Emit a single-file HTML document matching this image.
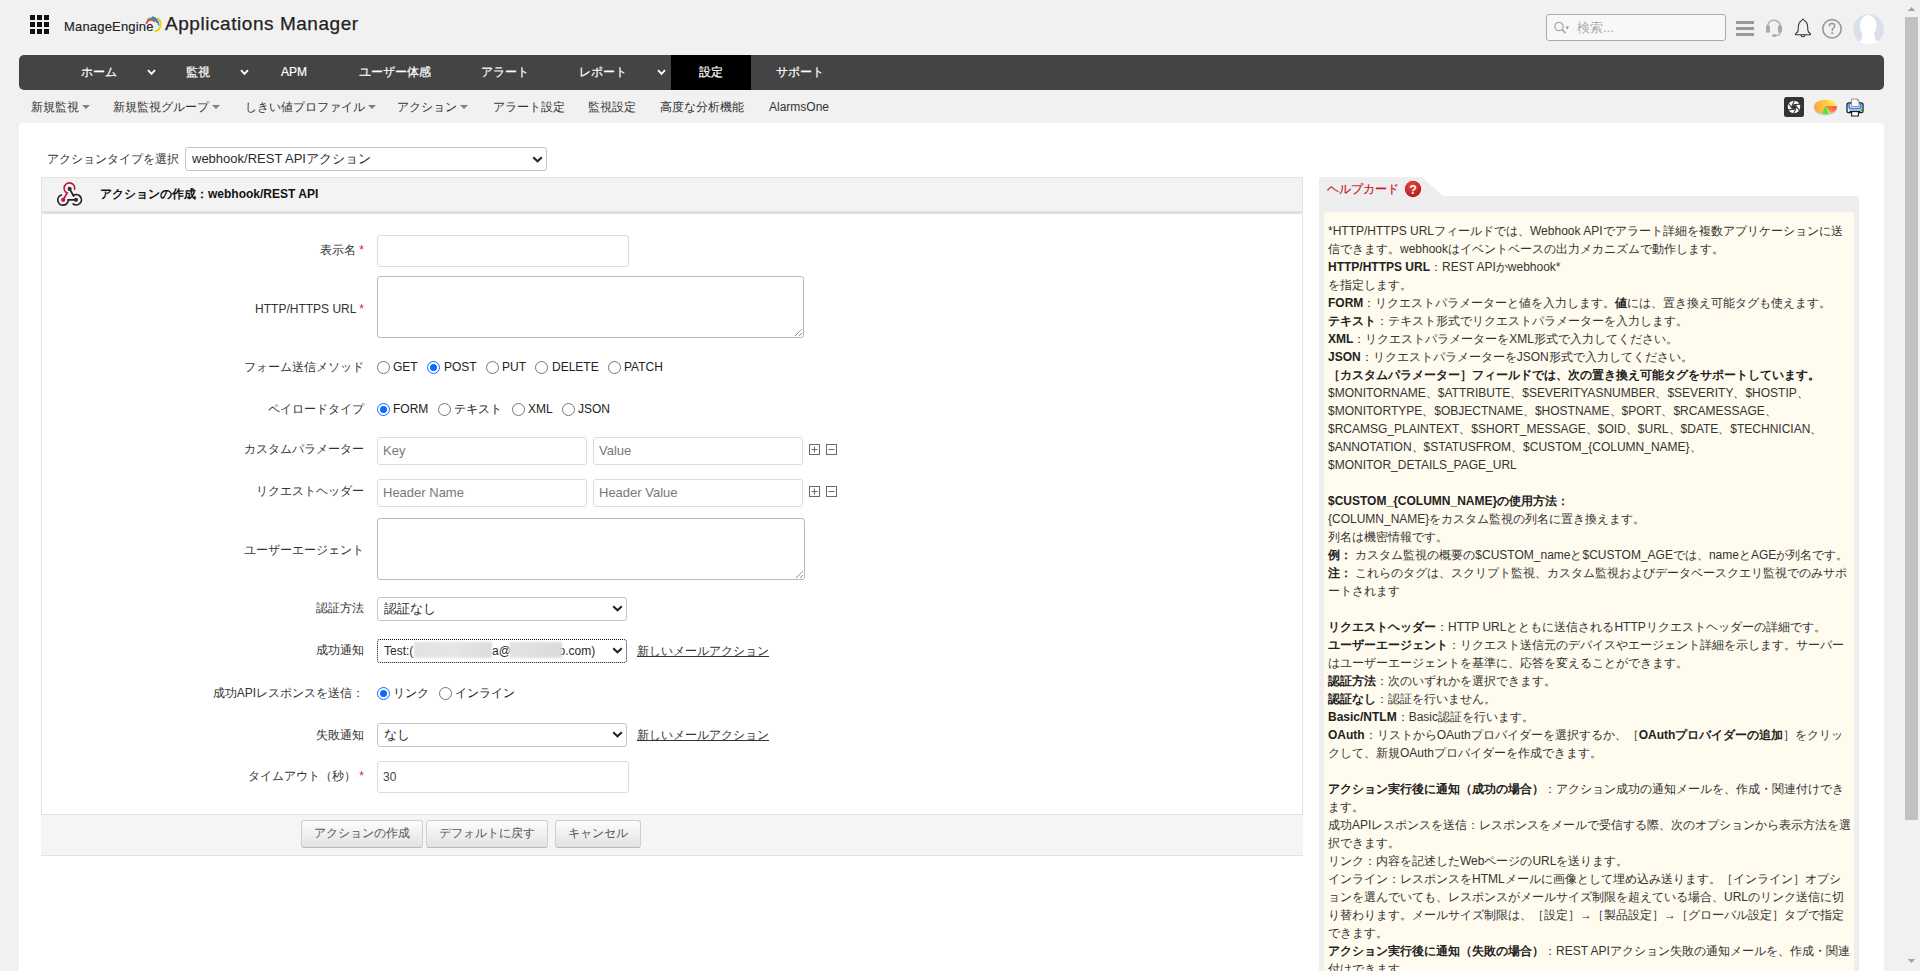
<!DOCTYPE html>
<html lang="ja">
<head>
<meta charset="utf-8">
<style>
*{box-sizing:border-box}
html,body{margin:0;padding:0;width:1920px;height:971px;overflow:hidden}
body{background:#f1f1f1;font-family:"Liberation Sans",sans-serif;font-size:12px;color:#333;position:relative}
.a{position:absolute;white-space:nowrap}
/* header */
.grid{left:30px;top:15px;width:19px;height:19px}
.grid i{position:absolute;width:5px;height:5px;background:#111}
.me{left:64px;top:19px;font-size:13px;line-height:15px;color:#222;letter-spacing:0.18px;-webkit-text-stroke:0.15px #222}
.am{left:165px;top:13px;font-size:19px;line-height:22px;color:#222;letter-spacing:0.55px;-webkit-text-stroke:0.25px #222}
.search{left:1546px;top:14px;width:180px;height:27px;border:1px solid #aaa;border-radius:3px;background:#f8f8f8}
.search span{position:absolute;left:30px;top:5px;color:#aaa;font-size:13px;line-height:15px}
/* nav */
.nav{left:19px;top:55px;width:1865px;height:35px;background:#444;border-radius:5px}
.nav .it{position:absolute;top:0;height:35px;line-height:34px;color:#fff;font-size:12px;-webkit-text-stroke:0.2px #fff}
.nav .chev{position:absolute}
.nav .act{position:absolute;left:652px;top:0;width:80px;height:35px;background:#000}
/* subnav */
.sub{top:100px;font-size:12px;color:#333;line-height:14px}
.tri{display:inline-block;width:0;height:0;border-left:4px solid transparent;border-right:4px solid transparent;border-top:4.5px solid #808080;vertical-align:middle;margin-left:3px;position:relative;top:-1px}
/* panel */
.panel{left:19px;top:123px;width:1865px;height:900px;background:#fff;border-radius:4px}
/* form */
.fp{left:41px;top:177px;width:1262px;height:679px;border:1px solid #e3e3e3;border-top:none}
.fh{left:41px;top:177px;width:1262px;height:37px;background:#f3f3f3;border:1px solid #e3e3e3;border-bottom:3px solid #e0e0e0}
.lbl{font-size:12px;color:#333;text-align:right;line-height:14px}
.star{color:#e0203c}
.inp{border:1px solid #dcdcdc;border-radius:3px;background:#fff}
.ta{border:1px solid #bbb;border-radius:3px;background:#fff}
.sel{border:1px solid #c4c4c4;border-radius:3px;background:#fff;font-size:13px;color:#2a2a2a}
.radio{width:13px;height:13px;border:1px solid #767676;border-radius:50%;background:#fff}
.radio.on{border-color:#0a6cff;border-width:1px}
.radio.on:after{content:"";position:absolute;left:2px;top:2px;width:7px;height:7px;border-radius:50%;background:#0a6cff}
.rt{font-size:12px;color:#222;line-height:14px}
.ph{font-size:13px;color:#777;line-height:15px}
.btn{height:28px;border:1px solid #cfcfcf;border-bottom-color:#b8b8b8;border-radius:3px;background:linear-gradient(#fdfdfd,#e2e2e2);font-size:12px;color:#555;text-align:center;line-height:25px}
.link{font-size:12px;color:#333;text-decoration:underline;line-height:14px}
/* help */
.hc{left:1319px;top:196px;width:540px;height:800px;background:#eee;border-radius:0 4px 0 0}
.htab{left:1319px;top:177px;width:125px;height:20px}
.hin{left:1324px;top:212px;width:530px;height:800px;background:#fffbee;border-radius:3px 3px 0 0}
.ht{left:1328px;top:222px;font-size:12px;line-height:18px;color:#333}
.ht b{color:#222}
</style>
</head>
<body>
<!-- header -->
<div class="a grid">
<i style="left:0;top:0"></i><i style="left:7px;top:0"></i><i style="left:14px;top:0"></i>
<i style="left:0;top:7px"></i><i style="left:7px;top:7px"></i><i style="left:14px;top:7px"></i>
<i style="left:0;top:14px"></i><i style="left:7px;top:14px"></i><i style="left:14px;top:14px"></i>
</div>
<div class="a me">ManageEngine</div>
<div class="a am">Applications Manager</div>

<svg class="a" style="left:140px;top:12px" width="26" height="24" viewBox="0 0 26 24">
 <path d="M7.4 7.8 A6.15 6.15 0 0 1 17.4 11" fill="none" stroke="#33a852" stroke-width="1.6"/>
 <path d="M12 5.1 A8.2 8.2 0 0 1 18.8 13.4" fill="none" stroke="#2f7bd8" stroke-width="1.6"/>
 <path d="M17.2 6 A7.10 7.10 0 0 1 14.6 19.2" fill="none" stroke="#f5d000" stroke-width="1.7"/>
 <path d="M6.2 11.8 A5.20 5.20 0 0 1 15.2 9.8" fill="none" stroke="#e8344a" stroke-width="1.6"/>
</svg>
<svg class="a" style="left:1552px;top:20px;z-index:2" width="20" height="16" viewBox="0 0 20 16">
 <circle cx="7" cy="6.5" r="4.2" fill="none" stroke="#aaa" stroke-width="1.3"/>
 <path d="M10 9.5 L13.5 13.2" stroke="#aaa" stroke-width="1.8"/>
 <path d="M13.5 6.4 L17 6.4 L15.25 9.8 Z" fill="#999"/>
</svg>
<svg class="a" style="left:1736px;top:21px" width="18" height="15"><rect x="0" y="0" width="18" height="3" fill="#9a9a9a"/><rect x="0" y="6" width="18" height="3" fill="#9a9a9a"/><rect x="0" y="12" width="18" height="3" fill="#9a9a9a"/></svg>
<svg class="a" style="left:1765px;top:18px" width="18" height="20" viewBox="0 0 18 20">
 <path d="M2.6 9.5 L2.6 8.5 A6.4 6.4 0 0 1 15.4 8.5 L15.4 9.5" fill="none" stroke="#aaa" stroke-width="1.4"/>
 <rect x="1" y="7.2" width="4" height="7.6" rx="1.6" fill="#aaa"/>
 <rect x="13" y="7.2" width="4" height="7.6" rx="1.6" fill="#aaa"/>
 <path d="M15.2 14.5 Q15 17.4 10.5 17.6" fill="none" stroke="#aaa" stroke-width="1.3"/>
 <rect x="7" y="16.2" width="4.4" height="2.8" rx="1.4" fill="#aaa"/>
</svg>
<svg class="a" style="left:1794px;top:18px" width="18" height="20" viewBox="0 0 18 20">
 <path d="M9 1 L10.8 3 C13 4.2 13.6 6.4 13.7 9 L13.9 12.6 C14.1 14 15.4 15 16.4 15.7 L16.4 16.7 L1.6 16.7 L1.6 15.7 C2.6 15 3.9 14 4.1 12.6 L4.3 9 C4.4 6.4 5 4.2 7.2 3 Z" fill="none" stroke="#333" stroke-width="1.05" stroke-linejoin="round"/>
 <path d="M7 17 A2 1.8 0 0 0 11 17" fill="none" stroke="#333" stroke-width="1.1"/>
</svg>
<svg class="a" style="left:1821px;top:18px" width="22" height="22" viewBox="0 0 22 22">
 <circle cx="11" cy="10.8" r="9.2" fill="none" stroke="#999" stroke-width="1.6"/>
 <path d="M8.3 8.2 C8.3 6.4 9.5 5.6 11 5.6 C12.6 5.6 13.7 6.6 13.7 8 C13.7 9.8 11.6 10 11.3 11.6 L11.3 13" fill="none" stroke="#999" stroke-width="1.5"/>
 <rect x="10.4" y="14.3" width="1.8" height="1.8" fill="#999"/>
</svg>
<svg class="a" style="left:1853px;top:14px" width="31" height="31" viewBox="0 0 31 31">
 <defs><clipPath id="avc"><circle cx="15.5" cy="15.5" r="15.2"/></clipPath></defs>
 <circle cx="15.5" cy="15.5" r="15.2" fill="#dae0ea"/>
 <g clip-path="url(#avc)" fill="#fff">
  <ellipse cx="15.2" cy="11.6" rx="8.4" ry="10.6"/>
  <path d="M9.6 19 L21 19 L21.8 24.5 C22.6 26.4 24.6 27.4 27.5 28 L27.5 32 L3.5 32 L3.5 28 C6.4 27.4 8.4 26.4 9 24.5 Z"/>
 </g>
</svg>
<div class="a search"><span>検索...</span></div>

<!-- nav -->
<div class="a nav">
 <div class="act"></div>
 <div class="it" style="left:62px">ホーム</div>
 <svg class="chev" style="left:128px;top:14px" width="9" height="7" viewBox="0 0 9 7"><path d="M1 1.2 L4.5 4.8 L8 1.2" fill="none" stroke="#fff" stroke-width="1.9"/></svg>
 <svg class="chev" style="left:221px;top:14px" width="9" height="7" viewBox="0 0 9 7"><path d="M1 1.2 L4.5 4.8 L8 1.2" fill="none" stroke="#fff" stroke-width="1.9"/></svg>
 <svg class="chev" style="left:638px;top:14px" width="9" height="7" viewBox="0 0 9 7"><path d="M1 1.2 L4.5 4.8 L8 1.2" fill="none" stroke="#fff" stroke-width="1.9"/></svg>
 <div class="it" style="left:167px">監視</div>
 <div class="it" style="left:262px">APM</div>
 <div class="it" style="left:340px">ユーザー体感</div>
 <div class="it" style="left:462px">アラート</div>
 <div class="it" style="left:560px">レポート</div>
 <div class="it" style="left:680px">設定</div>
 <div class="it" style="left:757px">サポート</div>
</div>

<!-- subnav -->
<div class="a sub" style="left:31px">新規監視<span class="tri"></span></div>
<div class="a sub" style="left:113px">新規監視グループ<span class="tri"></span></div>
<div class="a sub" style="left:245px">しきい値プロファイル<span class="tri"></span></div>
<div class="a sub" style="left:397px">アクション<span class="tri"></span></div>
<div class="a sub" style="left:493px">アラート設定</div>
<div class="a sub" style="left:588px">監視設定</div>
<div class="a sub" style="left:660px">高度な分析機能</div>
<div class="a sub" style="left:769px">AlarmsOne</div>


<svg class="a" style="left:1784px;top:97px" width="20" height="20" viewBox="0 0 20 20">
 <rect x="0" y="0" width="20" height="20" rx="2.5" fill="#333"/>
 <circle cx="10" cy="10" r="6.2" fill="#fff"/>
 <path d="M12.32 10.62 L9.53 16.60 M10.62 12.32 L4.05 12.89 M8.30 11.70 L4.52 6.29 M7.68 9.38 L10.47 3.40 M9.38 7.68 L15.95 7.11 M11.70 8.30 L15.48 13.71" stroke="#333" stroke-width="1.1"/>
 <polygon points="12.32 10.62 10.62 12.32 8.30 11.70 7.68 9.38 9.38 7.68 11.70 8.30" fill="#333"/>
</svg>
<svg class="a" style="left:1813px;top:99px" width="25" height="17" viewBox="0 0 25 17">
 <defs><linearGradient id="pg" x1="0" y1="0" x2="1" y2="0"><stop offset="0" stop-color="#ffa23c"/><stop offset="1" stop-color="#fff54a"/></linearGradient>
 <linearGradient id="rg" x1="0" y1="1" x2="1" y2="0"><stop offset="0" stop-color="#ffb070"/><stop offset="1" stop-color="#ff3f3f"/></linearGradient></defs>
 <ellipse cx="12.5" cy="9.2" rx="11.5" ry="7.2" fill="#c8c8c8"/>
 <ellipse cx="12.5" cy="7.8" rx="11.5" ry="7" fill="url(#pg)"/>
 <path d="M12 7 L23.9 7.2 A11.5 7 0 0 1 17.8 14 Z" fill="url(#rg)"/>
 <path d="M12 7 L15.8 14.6 A11.5 7 0 0 1 9.2 14.7 Z" fill="#3ef03e"/>
</svg>
<svg class="a" style="left:1846px;top:98px" width="19" height="19" viewBox="0 0 19 19">
 <path d="M1 7 Q1 5 3 5 L15 5 Q17 5 17 7 L17 13 Q17 14.6 15.4 14.6 L2.6 14.6 Q1 14.6 1 13 Z" fill="#f6f6f6" stroke="#1f1f1f" stroke-width="1.3"/>
 <path d="M3.2 5.2 L3.2 9 Q3.2 10.6 5 10.6 L13 10.6 Q14.8 10.6 14.8 9 L14.8 5.2" fill="none" stroke="#2b8cff" stroke-width="1.8"/>
 <path d="M5.5 1 L11.4 1 L13 2.6 L13 8.6 L5.5 8.6 Z" fill="#fbfbfb" stroke="#8a8a8a" stroke-width="0.9"/>
 <path d="M11.2 1 L11.2 2.8 L13 2.8" fill="none" stroke="#8a8a8a" stroke-width="0.8"/>
 <path d="M5.6 13 L5.6 18 L12.4 18 L12.4 13" fill="#fff" stroke="#1f1f1f" stroke-width="1.1"/>
 <path d="M3.5 13.4 L14.5 13.4" stroke="#1f1f1f" stroke-width="1.4"/>
 <circle cx="15.4" cy="12.2" r="0.9" fill="#22aa22"/>
</svg>
<div class="a panel"></div>

<!-- action type -->
<div class="a lbl" style="left:47px;top:152px;text-align:left">アクションタイプを選択</div>
<div class="a sel" style="left:185px;top:147px;width:362px;height:24px"><span style="position:absolute;left:6px;top:2px">webhook/REST APIアクション</span></div><svg class="a" style="left:532px;top:156px" width="11" height="7" viewBox="0 0 11 7"><path d="M1.2 1.2 L5.5 5.3 L9.8 1.2" fill="none" stroke="#222" stroke-width="2"/></svg>

<!-- form panel -->
<div class="a fp"></div>
<div class="a fh"></div>
<svg class="a" style="left:52px;top:178px" width="36" height="32" viewBox="0 0 36 32">
 <g fill="none" stroke-width="1.7" stroke-linecap="round">
  <path d="M22.6 11.2 A5.3 5.3 0 1 0 15.2 15 L11.2 21.8" stroke="#c8103e"/>
  <path d="M9.4 17 A5.2 5.2 0 1 0 16.2 21.8 L24 21.8" stroke="#222"/>
  <path d="M17.6 10.9 L21.6 18" stroke="#222"/>
  <path d="M21.4 17.4 A5.2 5.2 0 1 1 21.2 26" stroke="#222"/>
 </g>
 <circle cx="17.6" cy="10.9" r="2.1" fill="#333"/>
 <circle cx="11.2" cy="21.8" r="2.1" fill="#c8103e"/>
 <circle cx="24" cy="21.8" r="2.1" fill="#333"/>
</svg>
<div class="a" style="left:100px;top:186px;font-weight:bold;font-size:12px;color:#111">アクションの作成：webhook/REST API</div>

<div class="a lbl" style="right:1556px;top:243px">表示名 <span class="star">*</span></div>
<div class="a inp" style="left:377px;top:235px;width:252px;height:32px"></div>

<div class="a lbl" style="right:1556px;top:302px">HTTP/HTTPS URL <span class="star">*</span></div>
<div class="a ta" style="left:377px;top:276px;width:427px;height:62px"></div><svg class="a" style="left:794px;top:328px" width="9" height="9" viewBox="0 0 9 9"><path d="M1 8 L8 1 M5 8 L8 5" stroke="#555" stroke-width="1" stroke-dasharray="1 0.6"/></svg>

<div class="a lbl" style="right:1556px;top:360px">フォーム送信メソッド</div>
<div class="a radio" style="left:377px;top:361px"></div><div class="a rt" style="left:393px;top:360px">GET</div>
<div class="a radio on" style="left:427px;top:361px"></div><div class="a rt" style="left:444px;top:360px">POST</div>
<div class="a radio" style="left:486px;top:361px"></div><div class="a rt" style="left:502px;top:360px">PUT</div>
<div class="a radio" style="left:535px;top:361px"></div><div class="a rt" style="left:552px;top:360px">DELETE</div>
<div class="a radio" style="left:608px;top:361px"></div><div class="a rt" style="left:624px;top:360px">PATCH</div>

<div class="a lbl" style="right:1556px;top:402px">ペイロードタイプ</div>
<div class="a radio on" style="left:377px;top:403px"></div><div class="a rt" style="left:393px;top:402px">FORM</div>
<div class="a radio" style="left:438px;top:403px"></div><div class="a rt" style="left:454px;top:402px">テキスト</div>
<div class="a radio" style="left:512px;top:403px"></div><div class="a rt" style="left:528px;top:402px">XML</div>
<div class="a radio" style="left:562px;top:403px"></div><div class="a rt" style="left:578px;top:402px">JSON</div>

<div class="a lbl" style="right:1556px;top:442px">カスタムパラメーター</div>
<div class="a inp" style="left:377px;top:437px;width:210px;height:28px"><span class="a ph" style="left:5px;top:5px">Key</span></div>
<div class="a inp" style="left:593px;top:437px;width:210px;height:28px"><span class="a ph" style="left:5px;top:5px">Value</span></div>

<svg class="a" style="left:809px;top:444px" width="28" height="11" viewBox="0 0 28 11"><rect x="0.5" y="0.5" width="10" height="10" fill="#fff" stroke="#6a6a6a"/><path d="M2.5 5.5 H8.5 M5.5 2.5 V8.5" stroke="#6a6a6a"/><rect x="17.5" y="0.5" width="10" height="10" fill="#fff" stroke="#6a6a6a"/><path d="M19.5 5.5 H25.5" stroke="#6a6a6a"/></svg>
<div class="a lbl" style="right:1556px;top:484px">リクエストヘッダー</div>
<div class="a inp" style="left:377px;top:479px;width:210px;height:28px"><span class="a ph" style="left:5px;top:5px">Header Name</span></div>
<div class="a inp" style="left:593px;top:479px;width:210px;height:28px"><span class="a ph" style="left:5px;top:5px">Header Value</span></div>

<svg class="a" style="left:809px;top:486px" width="28" height="11" viewBox="0 0 28 11"><rect x="0.5" y="0.5" width="10" height="10" fill="#fff" stroke="#6a6a6a"/><path d="M2.5 5.5 H8.5 M5.5 2.5 V8.5" stroke="#6a6a6a"/><rect x="17.5" y="0.5" width="10" height="10" fill="#fff" stroke="#6a6a6a"/><path d="M19.5 5.5 H25.5" stroke="#6a6a6a"/></svg>
<div class="a lbl" style="right:1556px;top:543px">ユーザーエージェント</div>
<div class="a ta" style="left:377px;top:518px;width:428px;height:62px"></div><svg class="a" style="left:795px;top:570px" width="9" height="9" viewBox="0 0 9 9"><path d="M1 8 L8 1 M5 8 L8 5" stroke="#555" stroke-width="1" stroke-dasharray="1 0.6"/></svg>

<div class="a lbl" style="right:1556px;top:601px">認証方法</div>
<div class="a sel" style="left:377px;top:597px;width:250px;height:24px"><span style="position:absolute;left:6px;top:1.5px">認証なし</span></div><svg class="a" style="left:612px;top:605px" width="11" height="7" viewBox="0 0 11 7"><path d="M1.2 1.2 L5.5 5.3 L9.8 1.2" fill="none" stroke="#222" stroke-width="2"/></svg>

<div class="a lbl" style="right:1556px;top:643px">成功通知</div>
<div class="a sel" style="left:377px;top:639px;width:250px;height:24px;border:1px dotted #111"><span style="position:absolute;left:6px;top:3.5px;font-size:12px">Test:(</span><span style="position:absolute;left:114px;top:3.5px;font-size:12px">a@</span><span style="position:absolute;left:180.5px;top:3.5px;font-size:12px">o.com)</span>
<div style="position:absolute;left:36px;top:2px;width:78px;height:16px;background:linear-gradient(90deg,#e2e2e2,#e6e6e6 50%,#dcdcdc);filter:blur(0.8px)"></div>
<div style="position:absolute;left:131px;top:2px;width:53px;height:16px;background:linear-gradient(90deg,#e4e4e4,#dadada);filter:blur(0.8px)"></div></div><svg class="a" style="left:612px;top:647px" width="11" height="7" viewBox="0 0 11 7"><path d="M1.2 1.2 L5.5 5.3 L9.8 1.2" fill="none" stroke="#222" stroke-width="2"/></svg>
<div class="a link" style="left:637px;top:644px">新しいメールアクション</div>

<div class="a lbl" style="right:1556px;top:686px">成功APIレスポンスを送信：</div>
<div class="a radio on" style="left:377px;top:687px"></div><div class="a rt" style="left:393px;top:686px">リンク</div>
<div class="a radio" style="left:439px;top:687px"></div><div class="a rt" style="left:455px;top:686px">インライン</div>

<div class="a lbl" style="right:1556px;top:728px">失敗通知</div>
<div class="a sel" style="left:377px;top:723px;width:250px;height:24px"><span style="position:absolute;left:6px;top:1.5px">なし</span></div><svg class="a" style="left:612px;top:731px" width="11" height="7" viewBox="0 0 11 7"><path d="M1.2 1.2 L5.5 5.3 L9.8 1.2" fill="none" stroke="#222" stroke-width="2"/></svg>
<div class="a link" style="left:637px;top:728px">新しいメールアクション</div>

<div class="a lbl" style="right:1556px;top:769px">タイムアウト（秒） <span class="star">*</span></div>
<div class="a inp" style="left:377px;top:761px;width:252px;height:32px"><span class="a rt" style="left:5px;top:8px;color:#444">30</span></div>

<div class="a" style="left:41px;top:814px;width:1262px;height:42px;background:#f5f5f5;border-top:1px solid #e3e3e3;border-bottom:1px solid #e3e3e3"></div>
<div class="a btn" style="left:301px;top:820px;width:122px">アクションの作成</div>
<div class="a btn" style="left:426px;top:820px;width:122px">デフォルトに戻す</div>
<div class="a btn" style="left:555px;top:820px;width:86px">キャンセル</div>

<!-- help card -->
<div class="a hc"></div>
<svg class="a" style="left:1319px;top:177px" width="126" height="20"><path d="M0 3 Q0 0 3 0 L103 0 L125 20 L0 20 Z" fill="#eee"/></svg>
<div class="a" style="left:1327px;top:182px;color:#c8161d;font-size:12px;line-height:14px;-webkit-text-stroke:0.2px #c8161d">ヘルプカード</div>
<svg class="a" style="left:1404px;top:180px" width="18" height="18" viewBox="0 0 18 18">
 <defs><radialGradient id="qg" cx="0.4" cy="0.3" r="0.7"><stop offset="0" stop-color="#e8463e"/><stop offset="1" stop-color="#b51c1c"/></radialGradient></defs>
 <circle cx="9" cy="9" r="8.2" fill="url(#qg)"/>
 <text x="9" y="13.6" text-anchor="middle" font-family="Liberation Sans" font-weight="bold" font-size="12.5" fill="#fff">?</text>
</svg>
<div class="a hin"></div>
<div class="a ht">
*HTTP/HTTPS URLフィールドでは、Webhook APIでアラート詳細を複数アプリケーションに送<br>
信できます。webhookはイベントベースの出力メカニズムで動作します。<br>
<b>HTTP/HTTPS URL</b>：REST APIかwebhook*<br>
を指定します。<br>
<b>FORM</b>：リクエストパラメーターと値を入力します。<b>値</b>には、置き換え可能タグも使えます。<br>
<b>テキスト</b>：テキスト形式でリクエストパラメーターを入力します。<br>
<b>XML</b>：リクエストパラメーターをXML形式で入力してください。<br>
<b>JSON</b>：リクエストパラメーターをJSON形式で入力してください。<br>
<b>［カスタムパラメーター］フィールドでは、次の置き換え可能タグをサポートしています。</b><br>
$MONITORNAME、$ATTRIBUTE、$SEVERITYASNUMBER、$SEVERITY、$HOSTIP、<br>
$MONITORTYPE、$OBJECTNAME、$HOSTNAME、$PORT、$RCAMESSAGE、<br>
$RCAMSG_PLAINTEXT、$SHORT_MESSAGE、$OID、$URL、$DATE、$TECHNICIAN、<br>
$ANNOTATION、$STATUSFROM、$CUSTOM_{COLUMN_NAME}、<br>
$MONITOR_DETAILS_PAGE_URL<br>
<br>
<b>$CUSTOM_{COLUMN_NAME}の使用方法：</b><br>
{COLUMN_NAME}をカスタム監視の列名に置き換えます。<br>
列名は機密情報です。<br>
<b>例：</b> カスタム監視の概要の$CUSTOM_nameと$CUSTOM_AGEでは、nameとAGEが列名です。<br>
<b>注：</b> これらのタグは、スクリプト監視、カスタム監視およびデータベースクエリ監視でのみサポ<br>
ートされます<br>
<br>
<b>リクエストヘッダー</b>：HTTP URLとともに送信されるHTTPリクエストヘッダーの詳細です。<br>
<b>ユーザーエージェント</b>：リクエスト送信元のデバイスやエージェント詳細を示します。サーバー<br>
はユーザーエージェントを基準に、応答を変えることができます。<br>
<b>認証方法</b>：次のいずれかを選択できます。<br>
<b>認証なし</b>：認証を行いません。<br>
<b>Basic/NTLM</b>：Basic認証を行います。<br>
<b>OAuth</b>：リストからOAuthプロバイダーを選択するか、［<b>OAuthプロバイダーの追加</b>］をクリッ<br>
クして、新規OAuthプロバイダーを作成できます。<br>
<br>
<b>アクション実行後に通知（成功の場合）</b>：アクション成功の通知メールを、作成・関連付けでき<br>
ます。<br>
成功APIレスポンスを送信：レスポンスをメールで受信する際、次のオプションから表示方法を選<br>
択できます。<br>
リンク：内容を記述したWebページのURLを送ります。<br>
インライン：レスポンスをHTMLメールに画像として埋め込み送ります。［インライン］オプシ<br>
ョンを選んでいても、レスポンスがメールサイズ制限を超えている場合、URLのリンク送信に切<br>
り替わります。メールサイズ制限は、［設定］→［製品設定］→［グローバル設定］タブで指定<br>
できます。<br>
<b>アクション実行後に通知（失敗の場合）</b>：REST APIアクション失敗の通知メールを、作成・関連<br>
付けできます。
</div>

<!-- scrollbar -->
<div class="a" style="left:1903px;top:0;width:17px;height:971px;background:#f1f1f1"></div>
<div class="a" style="left:1905px;top:17px;width:13px;height:803px;background:#c1c1c1"></div>
<svg class="a" style="left:1907px;top:6px" width="9" height="6"><path d="M0.8 5 L4.5 1 L8.2 5 Z" fill="#a3a3a3"/></svg>
<svg class="a" style="left:1907px;top:958px" width="9" height="6"><path d="M0.8 1 L4.5 5 L8.2 1 Z" fill="#a3a3a3"/></svg>
</body>
</html>
